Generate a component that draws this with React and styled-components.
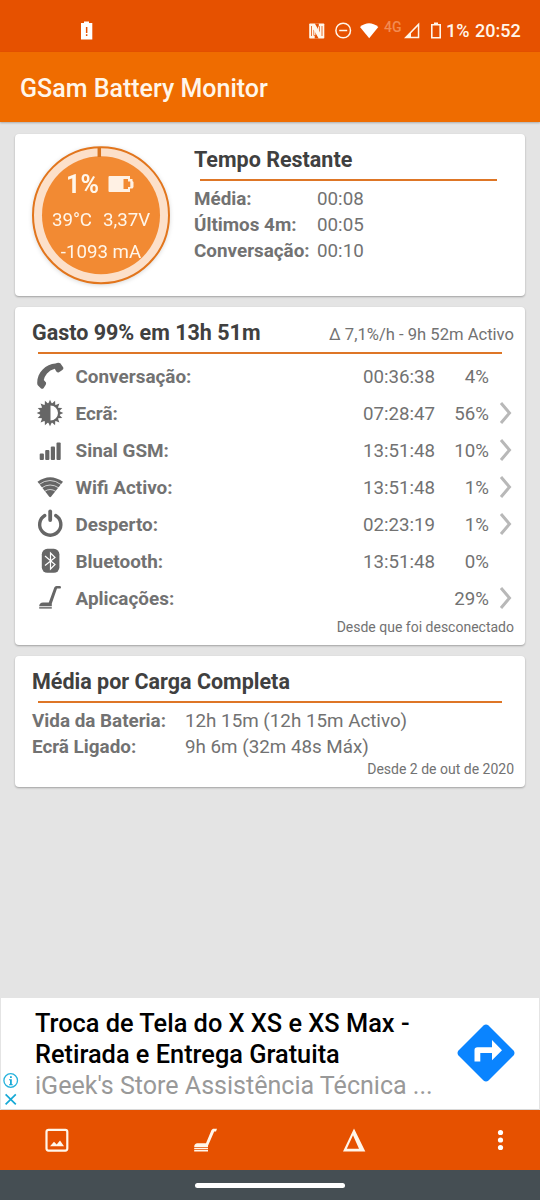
import React from "react";
import styled, { createGlobalStyle, css } from "styled-components";

// --------------------------------------------------

const colors = {
	statusBar: "#e65100",
	toolbar: "#ef6c00",
	page: "#e4e4e4",
	card: "#ffffff",
	rule: "#de7626",
	title: "#404040",
	text: "#727272",
	icon: "#666666",
	light: "#fff6ea",
	nav: "#454e53",
};

const GlobalStyle = createGlobalStyle`
	body {
		margin: 0;
		background: ${ colors.page };
		font-family: Roboto, "Liberation Sans", sans-serif;
		-webkit-font-smoothing: antialiased;
	}

	* {
		box-sizing: border-box;
	}

	svg {
		display: block;
		flex: none;
	}
`;

// --------------------------------------------------
// layout

const Screen = styled.div`
	display: flex;
	flex-direction: column;
	width: 540px;
	height: 1200px;
	overflow: hidden;
	background: ${ colors.page };
	white-space: nowrap;
`;

const StatusBar = styled.header`
	display: flex;
	flex: none;
	align-items: center;
	justify-content: space-between;
	height: 52px;
	padding: 9px 20px 0 80px;
	background: ${ colors.statusBar };
	color: ${ colors.light };
`;

const StatusIcons = styled.div`
	display: grid;
	grid-template-columns: 26px 25px 24px 20px 27px 15px 29px 45px;
	align-items: center;
	height: 30px;
`;

const StatusText = styled.span`
	font-size: 18px;
	font-weight: 500;
	line-height: 30px;
`;

const Network = styled.span`
	height: 24px;
	font-size: 14px;
	font-weight: 500;
	line-height: 16px;
	color: #f28b52;
`;

const Toolbar = styled.h1`
	flex: none;
	height: 70px;
	margin: 0;
	padding: 2px 20px 0;
	background: ${ colors.toolbar };
	box-shadow: 0 1px 2px rgba(0, 0, 0, 0.25);
	color: ${ colors.light };
	font-size: 25px;
	font-weight: 500;
	line-height: 70px;
`;

const Cards = styled.main`
	display: flex;
	flex: 1;
	flex-direction: column;
	gap: 11px;
	padding: 12px 15px 0;
`;

const Card = styled.section`
	height: ${({ height, }) => height}px;
	padding: ${({ padding, }) => padding || "11px 11px 0 17px"};
	border-radius: 4px;
	background: ${ colors.card };
	box-shadow: 0 1px 2px rgba(0, 0, 0, 0.3);
	color: ${ colors.text };
`;

const RemainingCard = styled(Card)`
	display: flex;
	gap: 24px;
`;

const CardHead = styled.div`
	display: flex;
	align-items: baseline;
	justify-content: space-between;
	height: 30px;
`;

const CardTitle = styled.h2`
	margin: 0;
	color: ${ colors.title };
	font-size: 21.5px;
	font-weight: 700;
	line-height: 30px;
`;

const CardNote = styled.span`
	font-size: 16.6px;
`;

const Rule = styled.div`
	height: 2px;
	margin: ${({ margin, }) => margin};
	background: ${ colors.rule };
`;

const Footnote = styled.div`
	font-size: 14px;
	line-height: ${({ line, }) => line || 18}px;
	text-align: right;
`;

// --------------------------------------------------
// label / value table

const Facts = styled.dl`
	display: grid;
	grid-template-columns: ${({ labelWidth, }) => labelWidth}px auto;
	grid-auto-rows: 26px;
	margin: 0;
	font-size: 18.8px;
	line-height: 26px;
`;

const Label = styled.dt`
	font-weight: 700;
	font-size: 18.85px;
`;

const Value = styled.dd`
	margin: 0;
`;

// --------------------------------------------------
// usage list

const UsageList = styled.ul`
	margin: 0;
	padding: 0;
	list-style: none;
`;

const UsageRow = styled.li`
	display: grid;
	grid-template-columns: 36px 1fr auto 54px 25px;
	align-items: center;
	height: 37px;
	font-size: 18.7px;
`;

const UsageLabel = styled.span`
	padding-left: 7.5px;
	font-size: 18.9px;
	font-weight: 700;
`;

const Percent = styled.span`
	text-align: right;
`;

const Chevron = styled.svg`
	justify-self: end;
	margin-right: 1px;
`;

// --------------------------------------------------
// gauge

const Gauge = styled.div`
	display: grid;
	flex: none;
	width: 138px;
	height: 140px;
	filter: drop-shadow(0 1px 2px rgba(0, 0, 0, 0.15));

	& > * {
		grid-area: 1 / 1;
	}
`;

const Readings = styled.div`
	display: flex;
	flex-direction: column;
	align-items: center;
	padding-top: 23px;
	color: ${ colors.light };
	font-size: 18.7px;
`;

const reading = css`
	display: flex;
	align-items: center;
	height: 32.5px;
`;

const Charge = styled.div`
	${ reading }
	gap: 9px;
	height: 32px;
	margin: 0 2px 3.5px 0;
	font-size: 25px;
	font-weight: 700;
`;

const Reading = styled.div`
	${ reading }
	gap: 11px;
`;

// --------------------------------------------------
// advert and bottom bars

const Ad = styled.aside`
	display: flex;
	flex: none;
	height: 112px;
	margin: 0 1px;
	border-bottom: 1px solid #d8d8d8;
	background: #fff;
`;

const AdMarks = styled.div`
	display: flex;
	flex-direction: column;
	justify-content: flex-end;
	gap: 3px;
	width: 34px;
	padding: 0 0 3px 2px;
`;

const AdCopy = styled.div`
	flex: 1;
	padding-top: 10px;
	font-size: 25.05px;
	line-height: 31px;
`;

const AdTitle = styled.div`
	color: #000;
	font-weight: 500;
	font-size: 25.35px;
`;

const AdText = styled.div`
	color: #999;
`;

const AdAction = styled.div`
	padding: 26px 24px 0 0;
`;

const Tabs = styled.nav`
	display: flex;
	flex: none;
	align-items: center;
	justify-content: space-between;
	height: 60px;
	padding: 0 28px 0 44px;
	background: ${ colors.statusBar };
`;

const SystemNav = styled.div`
	display: flex;
	flex: none;
	align-items: center;
	justify-content: center;
	height: 30px;
	background: ${ colors.nav };
`;

const Handle = styled.div`
	width: 150px;
	height: 5px;
	border-radius: 3px;
	background: #fff;
`;

// --------------------------------------------------
// icons

const PhoneIcon = () =>
	<svg width = "36" height = "37" viewBox = "0 0 36 37" fill = { colors.icon }>
		<path d = "M5.200 25C5 14 14 6 23.500 5.400Q26.500 4.200 28.300 5.300L31.300 9.500Q32 11 30 12.300L27 14.200Q25 15 24 13L22.800 10.800Q18 12 15 15.500Q12.500 18.500 11.800 22L14 24.500Q14.500 26 13.300 27.500L11.500 30.200Q10.200 31.200 8.800 30.200L6 27.500Q5.200 26.500 5.200 25Z"/>
	</svg>;

const ROTATIONS = Array.from({ length: 16, }, (_, i) => i * 22.5);

const BrightnessIcon = () =>
	<svg width = "36" height = "37" viewBox = "0 0 36 37" fill = { colors.icon }>
		{ ROTATIONS.map(r =>
			<path key = { r } d = "M15.800 9.500L18 4.700L20.200 9.500Z" transform = { `rotate(${ r } 18 18)` }/>
		) }
		<path fillRule = "evenodd" d = "M18 8a10 10 0 1 1 0 20a10 10 0 0 1 0-20ZM18.500 10.500V25.500A7.500 7.500 0 0 0 18.500 10.500Z"/>
	</svg>;

const SignalIcon = () =>
	<svg width = "36" height = "37" viewBox = "0 0 36 37" fill = { colors.icon }>
		<rect x = "7.700" y = "21.500" width = "4.200" height = "6.500" rx = "1"/>
		<rect x = "13.200" y = "18" width = "4.200" height = "10" rx = "1"/>
		<rect x = "18.800" y = "14.500" width = "4.200" height = "13.500" rx = "1"/>
		<rect x = "24.500" y = "10.500" width = "4.200" height = "17.500" rx = "1"/>
	</svg>;

const WifiIcon = () =>
	<svg width = "36" height = "37" viewBox = "0 0 36 37">
		<path fill = { colors.icon } d = "M5.500 12.800Q18 3.800 31 12.800L19 27.800Q18.200 28.700 17.300 27.800Z"/>
		<g fill = "none" stroke = "#fff" strokeWidth = "0.700">
			<path d = "M7 15.500Q18 7.500 29 15.500"/>
			<path d = "M9.500 19Q18 13 27 19"/>
			<path d = "M12.500 22.500Q18 18.500 24 22.500"/>
		</g>
	</svg>;

const PowerIcon = () =>
	<svg width = "36" height = "37" viewBox = "0 0 36 37" fill = "none" stroke = { colors.icon } strokeLinecap = "round">
		<path strokeWidth = "3.400" d = "M12.800 9.500A10.600 10.600 0 1 0 23.700 9.500"/>
		<path strokeWidth = "3.800" d = "M18.200 5.500V14"/>
	</svg>;

const BluetoothIcon = () =>
	<svg width = "36" height = "37" viewBox = "0 0 36 37">
		<rect x = "9.800" y = "5.800" width = "17.600" height = "24" rx = "5.500" fill = { colors.icon }/>
		<path fill = "none" stroke = "#fff" strokeWidth = "1.200" d = "M13 13L23 21.500L18.500 26V10L23 14.500L13 22.500"/>
	</svg>;

const VacuumIcon = () =>
	<svg width = "36" height = "37" viewBox = "0 0 36 37" fill = { colors.icon }>
		<path d = "M28 6H24.500Q22.800 6.200 22.300 7.500L16.800 22.500H11Q7.500 22.800 7.200 26H19.800V23.500L25 8.600H28Q29 8.400 29 7.300T28 6Z"/>
		<path opacity = "0.850" d = "M7.200 26.700H19.800V28.700H7.200Z"/>
	</svg>;

const BatteryAlertIcon = () =>
	<svg width = "13" height = "19" viewBox = "0 0 13 19">
		<path fill = "#fff" d = "M4 .5H9V2H12.300V18.500H1V2H4Z"/>
		<path fill = { colors.statusBar } d = "M5.900 6H7.400V12H5.900ZM5.900 13.300H7.400V15H5.900Z"/>
	</svg>;

const NfcIcon = () =>
	<svg width = "16" height = "16" viewBox = "0 0 16 16">
		<path fill = { colors.light } d = "M1 .5H14.500Q15.300.5 15.300 1.300V14.700Q15.300 15.500 14.500 15.500H1Q.2 15.500 .2 14.700V1.300Q.2.5 1 .5Z"/>
		<path fill = { colors.statusBar } d = "M5.800.5H9.800V3L11 3.500V9.500ZM9.700 15.500H5.700V13L4.500 12.500V6.500Z"/>
		<path fill = "none" stroke = { colors.statusBar } strokeWidth = "0.800" d = "M2.500 3V13M13 3V13"/>
		<path stroke = { colors.light } strokeWidth = "1.200" d = "M5.800 5.500V12.300M9.700 10.500V3.500"/>
	</svg>;

const DndIcon = () =>
	<svg width = "17" height = "17" viewBox = "0 0 17 17" fill = "none" stroke = { colors.light } strokeWidth = "1.500">
		<circle cx = "8.200" cy = "8.500" r = "7.300"/>
		<path d = "M4.200 8.500H12.200"/>
	</svg>;

const WifiFullIcon = () =>
	<svg width = "20" height = "16" viewBox = "0 0 20 16" fill = "#fff">
		<path d = "M0 4Q9-3.500 18.300 4L9.200 15.200Z"/>
	</svg>;

const NoSignalIcon = () =>
	<svg width = "17" height = "17" viewBox = "0 0 17 17" fill = { colors.light }>
		<path fillRule = "evenodd" d = "M0 16.300L15.300.5V16.300ZM7 11.200V14.800H13.800V4.200Z"/>
	</svg>;

const BatteryEmptyIcon = () =>
	<svg width = "11" height = "17" viewBox = "0 0 11 17" fill = { colors.light }>
		<path fillRule = "evenodd" d = "M3 .5H7V2H10V16.500H0V2H3ZM1.600 3.600V15H8.400V3.600Z"/>
	</svg>;

const GaugeDial = () =>
	<svg width = "138" height = "140" viewBox = "0 0 138 140">
		<circle cx = "69" cy = "70.200" r = "68" fill = "#fce0ca" stroke = "#e2751c" strokeWidth = "2"/>
		<circle cx = "69" cy = "70.200" r = "59" fill = "#f28a33"/>
		<path stroke = "#d9741f" strokeWidth = "3.500" d = "M67.300 2.500V12"/>
	</svg>;

const GaugeBattery = () =>
	<svg width = "26" height = "16" viewBox = "0 0 26 16">
		<path fill = "#fff1e4" fillRule = "evenodd" d = "M1.500 0H22V3H24.500V5L25.500 6V11L24.500 12.500H22V16H1.500Q.5 16 .5 15V1Q.5 0 1.500 0ZM15.500 3V13H20V11H22.300V5.500H20V3Z"/>
	</svg>;

const ChevronRight = () =>
	<Chevron width = "14" height = "23" viewBox = "0 0 14 23">
		<path fill = "none" stroke = "#b8b8b8" strokeWidth = "3" d = "M2 1L10.500 11L2 21"/>
	</Chevron>;

const AdInfoIcon = () =>
	<svg width = "16" height = "16" viewBox = "0 0 16 16">
		<circle cx = "7.700" cy = "7.500" r = "6.800" fill = "none" stroke = "#26b2dc" strokeWidth = "1.300"/>
		<path fill = "#16a9d6" d = "M7 3.200H8.800V5H7ZM6 6.200H8.800V11.200H9.800V12.200H6V11.200H7V7.200H6Z"/>
	</svg>;

const AdCloseIcon = () =>
	<svg width = "16" height = "14" viewBox = "0 0 16 14">
		<path stroke = "#16a9d6" strokeWidth = "1.700" d = "M2.600 2.400L12.800 12.400M12.800 2.400L2.600 12.400"/>
	</svg>;

const DirectionsIcon = () =>
	<svg width = "58" height = "58" viewBox = "0 0 58 58">
		<path fill = "#0a84ff" d = "M26.500 1.500Q29-.5 31.500 1.500L56.500 26.500Q58.500 29 56.500 31.500L31.500 56.500Q29 58.500 26.500 56.500L1.500 31.500Q-.5 29 1.500 26.500Z"/>
		<path fill = "#fff" d = "M17.500 37.500V26Q17.500 23.200 20.500 23.200H35V16L45 26.200L35 36.300V29H23.300V37.500Z"/>
	</svg>;

const ImageIcon = () =>
	<svg width = "26" height = "26" viewBox = "0 0 26 26">
		<rect x = "2.500" y = "2.800" width = "20.800" height = "20.800" rx = "2" fill = "none" stroke = { colors.light } strokeWidth = "2.200"/>
		<path fill = { colors.light } d = "M6 19.200L10 14.800L12.700 17.400L16 13.500L20 19.200Z"/>
	</svg>;

const VacuumTabIcon = () =>
	<svg width = "26" height = "26" viewBox = "0 0 26 26" fill = { colors.light }>
		<path d = "M25 1.700H21L19.500 3L14 16.300H5Q2.200 17 2.200 20H16V18.700L22.200 4.500H24Z"/>
		<path d = "M2.200 20.700H16V21.900H2.200ZM2.200 22.800H16V24.400H2.200Z"/>
	</svg>;

const DeltaIcon = () =>
	<svg width = "26" height = "26" viewBox = "0 0 26 26" fill = { colors.light }>
		<path fillRule = "evenodd" d = "M14 1.500L25.300 24.500H3ZM13 8.300L6.800 21.700H19Z"/>
	</svg>;

const MoreIcon = () =>
	<svg width = "24" height = "26" viewBox = "0 0 24 26" fill = "#fff">
		<circle cx = "12.500" cy = "5.500" r = "2.600"/>
		<circle cx = "12.500" cy = "13" r = "2.600"/>
		<circle cx = "12.500" cy = "20.500" r = "2.600"/>
	</svg>;

// --------------------------------------------------

const usage = [
	{ label: "Conversação:", Icon: PhoneIcon, time: "00:36:38", percent: "4%", },
	{ label: "Ecrã:", Icon: BrightnessIcon, time: "07:28:47", percent: "56%", more: true, },
	{ label: "Sinal GSM:", Icon: SignalIcon, time: "13:51:48", percent: "10%", more: true, },
	{ label: "Wifi Activo:", Icon: WifiIcon, time: "13:51:48", percent: "1%", more: true, },
	{ label: "Desperto:", Icon: PowerIcon, time: "02:23:19", percent: "1%", more: true, },
	{ label: "Bluetooth:", Icon: BluetoothIcon, time: "13:51:48", percent: "0%", },
	{ label: "Aplicações:", Icon: VacuumIcon, time: "", percent: "29%", more: true, },
];

const remaining = [
	[ "Média:", "00:08", ],
	[ "Últimos 4m:", "00:05", ],
	[ "Conversação:", "00:10", ],
];

const averages = [
	[ "Vida da Bateria:", "12h 15m (12h 15m Activo)", ],
	[ "Ecrã Ligado:", "9h 6m (32m 48s Máx)", ],
];

const FactTable = ({ rows, labelWidth, }) =>
	<Facts labelWidth = { labelWidth }>
		{ rows.map(([ label, value, ]) =>
			<React.Fragment key = { label }>
				<Label>{ label }</Label>
				<Value>{ value }</Value>
			</React.Fragment>
		) }
	</Facts>;

const Usage = ({ label, Icon, time, percent, more, }) =>
	<UsageRow>
		<Icon/>
		<UsageLabel>{ label }</UsageLabel>
		<span>{ time }</span>
		<Percent>{ percent }</Percent>
		{ more && <ChevronRight/> }
	</UsageRow>;

const Remaining = styled.div`
	flex: 1;
`;

const Status = () =>
	<StatusBar>
		<BatteryAlertIcon/>
		<StatusIcons>
			<NfcIcon/>
			<DndIcon/>
			<WifiFullIcon/>
			<Network>4G</Network>
			<NoSignalIcon/>
			<BatteryEmptyIcon/>
			<StatusText>1%</StatusText>
			<StatusText>20:52</StatusText>
		</StatusIcons>
	</StatusBar>;

const App = () => (
	<Screen>
		<GlobalStyle/>
		<Status/>
		<Toolbar>GSam Battery Monitor</Toolbar>

		<Cards>
			<RemainingCard height = { 162 } padding = "11px 28px 0 17px">
				<Gauge>
					<GaugeDial/>
					<Readings>
						<Charge>1% <GaugeBattery/></Charge>
						<Reading><span>39°C</span><span>3,37V</span></Reading>
						<Reading>-1093 mA</Reading>
					</Readings>
				</Gauge>
				<Remaining>
					<CardHead><CardTitle>Tempo Restante</CardTitle></CardHead>
					<Rule margin = "4px 0 5px 6px"/>
					<FactTable rows = { remaining } labelWidth = { 123 }/>
				</Remaining>
			</RemainingCard>

			<Card height = { 338 }>
				<CardHead>
					<CardTitle>Gasto 99% em 13h 51m</CardTitle>
					<CardNote>Δ 7,1%/h - 9h 52m Activo</CardNote>
				</CardHead>
				<Rule margin = "4px 12px 4px 6px"/>
				<UsageList>
					{ usage.map(row => <Usage key = { row.label } { ...row }/>) }
				</UsageList>
				<Footnote line = { 20 }>Desde que foi desconectado</Footnote>
			</Card>

			<Card height = { 131 }>
				<CardHead><CardTitle>Média por Carga Completa</CardTitle></CardHead>
				<Rule margin = "4px 12px 5px 6px"/>
				<FactTable rows = { averages } labelWidth = { 153 }/>
				<Footnote>Desde 2 de out de 2020</Footnote>
			</Card>
		</Cards>

		<Ad>
			<AdMarks>
				<AdInfoIcon/>
				<AdCloseIcon/>
			</AdMarks>
			<AdCopy>
				<AdTitle>Troca de Tela do X XS e XS Max -</AdTitle>
				<AdTitle>Retirada e Entrega Gratuita</AdTitle>
				<AdText>iGeek's Store Assistência Técnica ...</AdText>
			</AdCopy>
			<AdAction><DirectionsIcon/></AdAction>
		</Ad>

		<Tabs>
			<ImageIcon/>
			<VacuumTabIcon/>
			<DeltaIcon/>
			<MoreIcon/>
		</Tabs>
		<SystemNav><Handle/></SystemNav>
	</Screen>
);

export default App;
